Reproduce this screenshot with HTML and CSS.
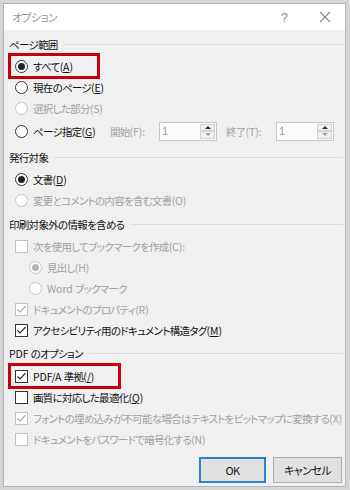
FILE: index.html
```html
<!DOCTYPE html>
<html lang="ja">
<head>
<meta charset="utf-8">
<link rel="stylesheet" href="styles.css">
</head>
<body>
<div class="dialog">
  <div class="titlebar">
    <span class="title">オプション</span>
    <span class="tb-help">?</span>
    <span class="tb-close"><svg width="12" height="12" viewBox="0 0 12 12"><path d="M1 1L11 11M11 1L1 11" stroke="#8a8a8a" stroke-width="1.1" fill="none"/></svg></span>
  </div>
  <div class="content">
    <section class="group g1">
      <div class="gtitle"><span>ページ範囲</span></div>
      <div class="gbody">
        <div class="opt"><span class="hlwrap"><span class="hl hl-a"></span><span class="radio on"></span><span class="lbl">すべて<span class="lat">(<u>A</u>)</span></span></span></div>
        <div class="opt"><span class="radio"></span><span class="lbl">現在のページ<span class="lat">(<u>E</u>)</span></span></div>
        <div class="opt dis"><span class="radio"></span><span class="lbl">選択した部分<span class="lat">(S)</span></span></div>
        <div class="opt spinrow"><span class="radio"></span><span class="lbl pg">ページ指定<span class="lat">(<u>G</u>)</span></span>
          <span class="slbl s1">開始<span class="lat">(F):</span></span>
          <span class="spin"><span class="sval">1</span><span class="sbtns"><span class="sb up"></span><span class="sb dn"></span></span></span>
          <span class="slbl s2">終了<span class="lat">(T):</span></span>
          <span class="spin"><span class="sval">1</span><span class="sbtns"><span class="sb up"></span><span class="sb dn"></span></span></span>
        </div>
      </div>
    </section>
    <section class="group g2">
      <div class="gtitle"><span>発行対象</span></div>
      <div class="gbody">
        <div class="opt"><span class="radio on"></span><span class="lbl">文書<span class="lat">(<u>D</u>)</span></span></div>
        <div class="opt dis"><span class="radio"></span><span class="lbl">変更とコメントの内容を含む文書<span class="lat">(O)</span></span></div>
      </div>
    </section>
    <section class="group g3">
      <div class="gtitle"><span>印刷対象外の情報を含める</span></div>
      <div class="gbody">
        <div class="opt dis"><span class="check"></span><span class="lbl">次を使用してブックマークを作成<span class="lat">(C):</span></span></div>
        <div class="opt dis sub"><span class="radio on"></span><span class="lbl">見出し<span class="lat">(H)</span></span></div>
        <div class="opt dis sub"><span class="radio"></span><span class="lbl"><span class="lat">Word </span>ブックマーク</span></div>
        <div class="opt dis"><span class="check"><svg viewBox="0 0 13 13" width="13" height="13"><path d="M2.5 6.5L5 9L10.5 3.2" stroke="#a8a8a8" stroke-width="1.2" fill="none"/></svg></span><span class="lbl">ドキュメントのプロパティ<span class="lat">(R)</span></span></div>
        <div class="opt"><span class="check"><svg viewBox="0 0 13 13" width="13" height="13"><path d="M2.5 6.5L5 9L10.5 3.2" stroke="#222" stroke-width="1.2" fill="none"/></svg></span><span class="lbl">アクセシビリティ用のドキュメント構造タグ<span class="lat">(<u>M</u>)</span></span></div>
      </div>
    </section>
    <section class="group g4">
      <div class="gtitle"><span><span class="lat">PDF </span>のオプション</span></div>
      <div class="gbody">
        <div class="opt"><span class="hlwrap"><span class="hl hl-b"></span><span class="check"><svg viewBox="0 0 13 13" width="13" height="13"><path d="M2.5 6.5L5 9L10.5 3.2" stroke="#222" stroke-width="1.2" fill="none"/></svg></span><span class="lbl"><span class="lat">PDF/A </span>準拠<span class="lat">(<u>/</u>)</span></span></span></div>
        <div class="opt"><span class="check"></span><span class="lbl">画質に対応した最適化<span class="lat">(<u>Q</u>)</span></span></div>
        <div class="opt dis"><span class="check"><svg viewBox="0 0 13 13" width="13" height="13"><path d="M2.5 6.5L5 9L10.5 3.2" stroke="#a8a8a8" stroke-width="1.2" fill="none"/></svg></span><span class="lbl">フォントの埋め込みが不可能な場合はテキストをビットマップに変換する<span class="lat">(X)</span></span></div>
        <div class="opt dis"><span class="check"></span><span class="lbl">ドキュメントをパスワードで暗号化する<span class="lat">(N)</span></span></div>
      </div>
    </section>
    <div class="buttons">
      <button class="btn default">OK</button>
      <button class="btn cancel">キャンセル</button>
    </div>
  </div>
</div>
</body>
</html>
```
FILE: styles.css
```css
html, body {
  margin: 0;
  padding: 0;
  width: 350px;
  height: 490px;
  overflow: hidden;
  background: #d5d5d5;
}
body {
  font-family: "Noto Sans CJK JP", "Noto Sans", sans-serif;
  font-size: 10.5px;
  letter-spacing: -0.7px;
  font-feature-settings: "palt";
  color: #111;
}
.lat {
  letter-spacing: -0.1px;
  white-space: pre;
}
.dialog {
  margin: 3px 4px 0 3px;
  height: 482px;
  border: 1px solid #b4b4b4;
  background: #f0f0f0;
  display: flex;
  flex-direction: column;
}
.titlebar {
  height: 26px;
  background: #fff;
  display: flex;
  align-items: center;
  padding-left: 8px;
  padding-right: 14px;
}
.title {
  flex: 1;
  color: #9a9a9a;
  font-size: 11px;
}
.tb-help {
  color: #8a8a8a;
  font-family: "Liberation Sans", sans-serif;
  font-size: 13px;
  letter-spacing: 0;
  margin-right: 31px;
}
.tb-close {
  display: flex;
  align-items: center;
}
.content {
  padding: 4px 2px 0 5px;
  flex: 1;
  display: flex;
  flex-direction: column;
}
.group.g2 { margin-top: 4px; }
.group.g3 { margin-top: 3px; }
.group.g4 { margin-top: 2px; }
.gtitle {
  height: 20px;
  display: flex;
  align-items: center;
}
.gtitle::after {
  content: "";
  flex: 1;
  height: 1px;
  background: #dcdcdc;
  margin-left: 6px;
}
.gbody { padding-top: 2px; }
.g4 .gbody { padding-top: 3px; }
.opt {
  height: 21px;
  display: flex;
  align-items: center;
  padding-left: 6px;
  white-space: nowrap;
}
.opt.sub { padding-left: 20px; }
.opt.spinrow { height: 24px; }
.hlwrap {
  position: relative;
  display: flex;
  align-items: center;
  height: 21px;
}
.hl {
  position: absolute;
  left: -7px;
  top: -3px;
  height: 26px;
  box-sizing: border-box;
  border: 3px solid #c8000c;
}
.hl-a { width: 92px; }
.hl-b { width: 113px; }
.lbl { margin-left: 5px; }
.lbl.pg { width: 65px; }
.opt.dis .lbl { color: #a2a2a2; }
.radio {
  width: 13px;
  height: 13px;
  box-sizing: border-box;
  border: 1px solid #333;
  border-radius: 50%;
  background: #fff;
  display: flex;
  align-items: center;
  justify-content: center;
  flex: none;
}
.radio.on::after {
  content: "";
  width: 7px;
  height: 7px;
  border-radius: 50%;
  background: #222;
}
.opt.dis .radio { border-color: #c4c4c4; }
.opt.dis .radio.on::after { background: #b5b5b5; }
.check {
  width: 13px;
  height: 13px;
  box-sizing: border-box;
  border: 1px solid #333;
  background: #fff;
  flex: none;
  position: relative;
}
.check svg {
  position: absolute;
  left: -1px;
  top: -1px;
}
.opt.dis .check { border-color: #c4c4c4; }
.slbl { color: #a2a2a2; }
.s1 { margin-left: 12px; width: 49px; }
.s2 { margin-left: 9px; width: 50px; }
.spin {
  width: 58px;
  height: 19px;
  box-sizing: border-box;
  border: 1px solid #c8c8c8;
  background: #fbfbfb;
  display: flex;
  align-items: stretch;
}
.sval {
  flex: 1;
  color: #9a9a9a;
  font-family: "Liberation Sans", sans-serif;
  font-size: 11px;
  letter-spacing: 0;
  padding-left: 2px;
  padding-top: 2px;
}
.sbtns {
  width: 15px;
  display: flex;
  flex-direction: column;
  margin: 1px 1px 1px 0;
}
.sb {
  flex: 1;
  background: #f0f0f0;
  border: 1px solid #d4d4d4;
  display: flex;
  align-items: center;
  justify-content: center;
}
.sb.up::after {
  content: "";
  border-left: 3px solid transparent;
  border-right: 3px solid transparent;
  border-bottom: 3px solid #333;
}
.sb.dn::after {
  content: "";
  border-left: 3px solid transparent;
  border-right: 3px solid transparent;
  border-top: 3px solid #a0a0a0;
}
.buttons {
  display: flex;
  justify-content: flex-end;
  gap: 7px;
  margin-top: 7px;
  padding-right: 1px;
}
.btn {
  height: 26px;
  box-sizing: border-box;
  background: #e1e1e1;
  border: 1px solid #adadad;
  font-family: inherit;
  font-size: 11px;
  letter-spacing: -0.6px;
  font-feature-settings: "palt";
  color: #111;
  padding: 0;
}
.btn.default {
  width: 67px;
  border: 2px solid #2f7fd0;
}
.btn.cancel { width: 69px; }
```
